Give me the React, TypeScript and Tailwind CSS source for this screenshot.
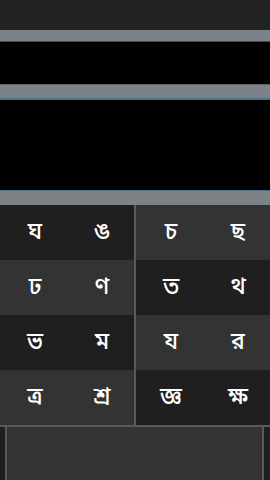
import React from "react";

const rows: { l: string[]; r: string[]; lDark: boolean }[] = [
  { l: ["ঘ", "ঙ"], r: ["চ", "ছ"], lDark: true },
  { l: ["ঢ", "ণ"], r: ["ত", "থ"], lDark: false },
  { l: ["ভ", "ম"], r: ["য", "র"], lDark: true },
  { l: ["ত্র", "শ্র"], r: ["জ্ঞ", "ক্ষ"], lDark: false },
];

function Half({ keys, dark }: { keys: string[]; dark: boolean }) {
  return (
    <div className={`flex flex-1 items-center ${dark ? "bg-[#1f1f1f]" : "bg-[#333333]"}`}>
      {keys.map((k) => (
        <div key={k} className="flex-1 flex items-center justify-center pl-[3px] pt-[2px] text-white text-[23px] font-medium leading-none">
          {k}
        </div>
      ))}
    </div>
  );
}

export default function App() {
  return (
    <div
      className="w-[270px] h-[480px] flex flex-col bg-black overflow-hidden"
      style={{ fontFamily: '"Noto Sans Bengali", "Lohit Bengali", "Noto Sans", sans-serif' }}
    >
      <div className="h-[30px] bg-[#222222]" />
      <div className="h-[12px] bg-[#7b8389] border-b border-[#4a4f52]" />
      <div className="h-[42px] bg-black" />
      <div className="h-[16px] bg-[#7b8389] border-t border-[#5a5f62] border-b-2 border-b-[#4d7590]" />
      <div className="h-[90px] bg-black" />
      <div className="h-[15px] bg-[#7b8389] border-t border-[#4d7590]" />
      <div className="flex flex-col h-[220px]">
        {rows.map((row, i) => (
          <div key={i} className="flex flex-1">
            <Half keys={row.l} dark={row.lDark} />
            <div className="w-[2px] bg-[#5a5a5a]" />
            <Half keys={row.r} dark={!row.lDark} />
          </div>
        ))}
      </div>
      <div className="flex flex-1 border-t-2 border-[#5a5a5a]">
        <div className="w-[5px] bg-[#1f1f1f]" />
        <div className="w-[2px] bg-[#5a5a5a]" />
        <div className="w-[255px] bg-[#333333]" />
        <div className="w-[2px] bg-[#5a5a5a]" />
        <div className="flex-1 bg-[#1f1f1f]" />
      </div>
    </div>
  );
}
